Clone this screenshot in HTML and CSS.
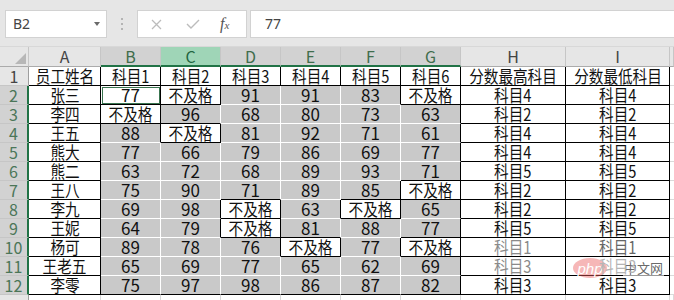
FILE: index.html
```html
<!DOCTYPE html>
<html lang="zh-CN">

<head>
  <meta charset="UTF-8">
  <meta name="viewport" content="width=device-width, initial-scale=1.0">
  <title>成绩表</title>
  <link rel="stylesheet" href="styles.css">
</head>

<body>
  <div class="toolbar">
    <div class="name-box">
      <span>B2</span>
      <span class="caret"></span>
    </div>
    <div class="grip"><i></i><i></i><i></i></div>
    <div class="fx-buttons">
      <svg class="btn-cancel" width="11" height="11" viewBox="0 0 11 11">
        <path d="M1 1 L10 10 M10 1 L1 10" stroke="#bcbcbc" stroke-width="1.3" fill="none" />
      </svg>
      <svg class="btn-enter" width="14" height="10" viewBox="0 0 14 10">
        <path d="M1 5 L5 9 L13 1" stroke="#bcbcbc" stroke-width="1.4" fill="none" />
      </svg>
      <span class="fx">f<small>x</small></span>
    </div>
    <div class="formula">77</div>
  </div>

  <div class="sheet" id="sheet">
    <div class="corner"><span class="corner-tri"></span></div>
    <div class="col-head">A</div>
    <div class="col-head sel">B</div>
    <div class="col-head sel hot">C</div>
    <div class="col-head sel">D</div>
    <div class="col-head sel">E</div>
    <div class="col-head sel">F</div>
    <div class="col-head sel">G</div>
    <div class="col-head">H</div>
    <div class="col-head">I</div>
    <div class="col-head"></div>

    <div class="watermark">
      <span class="wm-logo">php</span>
      <span class="wm-text">中文网</span>
    </div>
  </div>

  <script>
    const header = ['员工姓名', '科目1', '科目2', '科目3', '科目4', '科目5', '科目6', '分数最高科目', '分数最低科目'];

    const scores = [
      ['张三', 77, '不及格', 91, 91, 83, '不及格', '科目4', '科目4'],
      ['李四', '不及格', 96, 68, 80, 73, 63, '科目2', '科目2'],
      ['王五', 88, '不及格', 81, 92, 71, 61, '科目4', '科目4'],
      ['熊大', 77, 66, 79, 86, 69, 77, '科目4', '科目4'],
      ['熊二', 63, 72, 68, 89, 93, 71, '科目5', '科目5'],
      ['王八', 75, 90, 71, 89, 85, '不及格', '科目2', '科目2'],
      ['李九', 69, 98, '不及格', 63, '不及格', 65, '科目2', '科目2'],
      ['王妮', 64, 79, '不及格', 81, 88, 77, '科目5', '科目5'],
      ['杨可', 89, 78, 76, '不及格', 77, '不及格', '科目1', '科目1'],
      ['王老五', 65, 69, 77, 65, 62, 69, '科目3', '科目3'],
      ['李零', 75, 97, 98, 86, 87, 82, '科目3', '科目3']
    ];

    // active cell B2 stays white
    const active = { r: 0, c: 1 };

    // cells that sit under the watermark haze
    const faded = { '8-7': 'faded', '9-7': 'faded', '8-8': 'dim', '9-8': 'hidden' };

    const sheet = document.getElementById('sheet');

    function isGray(r, c) {
      if (r === active.r && c === active.c) return false;
      return r >= 0 && r < scores.length && c >= 1 && c <= 6 && typeof scores[r][c] === 'number';
    }

    function addDiv(className, value) {
      const div = document.createElement('div');
      div.className = className;
      if (typeof value === 'string') {
        div.innerHTML = `<span class="txt">${value}</span>`;
      } else if (value !== undefined) {
        div.textContent = value;
      }
      sheet.appendChild(div);
      return div;
    }

    // Row 1: titles
    addDiv('row-head', 1);
    header.forEach(title => addDiv('cell', title));
    addDiv('cell edge');

    // Rows 2-12: scores
    scores.forEach((row, r) => {
      addDiv('row-head sel', r + 2);
      row.forEach((value, c) => {
        let cls = 'cell';
        if (isGray(r, c)) {
          cls += ' gray';
          if (isGray(r, c + 1)) cls += ' jr';
          if (isGray(r + 1, c)) cls += ' jb';
        }
        if (r === active.r && c === active.c) cls += ' active';
        if (faded[r + '-' + c]) cls += ' ' + faded[r + '-' + c];
        addDiv(cls, value);
      });
      addDiv('cell edge');
    });

    // Row 13: empty, only its top shows
    addDiv('row-head');
    for (let c = 0; c < 10; c++) addDiv('cell blank');
  </script>
</body>

</html>
```

FILE: styles.css
```css
* {
  box-sizing: border-box;
  margin: 0;
  padding: 0;
}

body {
  width: 674px;
  height: 300px;
  overflow: hidden;
  background: #fff;
  font-family: 'Noto Sans', sans-serif;
}

/* formula bar */
.toolbar {
  display: flex;
  align-items: flex-start;
  height: 47px;
  padding: 10px 0 0 5px;
  background: #e6e6e6;
  border-bottom: 1px solid #d8d8d8;
}

.name-box {
  display: flex;
  align-items: center;
  justify-content: space-between;
  width: 102px;
  height: 28px;
  padding: 0 6px 0 7px;
  background: #fff;
  border: 1px solid #d2d2d2;
  color: #444;
  font-size: 14px;
  line-height: 18px;
}

.caret {
  width: 0;
  height: 0;
  border-left: 3.5px solid transparent;
  border-right: 3.5px solid transparent;
  border-top: 4px solid #6a6a6a;
}

.grip {
  display: flex;
  flex-direction: column;
  align-items: center;
  gap: 3px;
  width: 30px;
  padding-top: 8px;
}

.grip i {
  width: 2px;
  height: 2px;
  background: #b4b4b4;
}

.fx-buttons {
  display: flex;
  align-items: center;
  width: 110px;
  height: 28px;
  padding-left: 13px;
  background: #fff;
  border: 1px solid #d2d2d2;
}

.btn-enter {
  margin-left: 24px;
}

.fx {
  margin-left: 20px;
  font-family: 'Liberation Serif', serif;
  font-style: italic;
  font-size: 16px;
  line-height: 18px;
  color: #555;
}

.fx small {
  font-size: 11px;
}

.formula {
  flex: 1;
  height: 28px;
  margin-left: 3px;
  padding-left: 14px;
  background: #fff;
  border: 1px solid #d2d2d2;
  border-right: none;
  color: #444;
  font-size: 14px;
  line-height: 26px;
}

/* grid */
.sheet {
  position: relative;
  display: grid;
  grid-template-columns: 29px 72px repeat(6, 60px) 105px 104px 1fr;
  grid-template-rows: 20px;
  grid-auto-rows: 19px;
  font-family: 'Noto Sans CJK SC', sans-serif;
}

.corner {
  display: flex;
  align-items: flex-end;
  justify-content: flex-end;
  padding: 0 2px 2px 0;
  background: #e6e6e6;
  border-right: 1px solid #c6c6c6;
  border-bottom: 1px solid #ababab;
}

.corner-tri {
  width: 0;
  height: 0;
  border-left: 11px solid transparent;
  border-bottom: 11px solid #b7b7b7;
}

.col-head {
  display: flex;
  align-items: center;
  justify-content: center;
  background: #e6e6e6;
  border-right: 1px solid #c6c6c6;
  border-bottom: 1px solid #ababab;
  color: #444;
  font-size: 16px;
  line-height: 17px;
}

.col-head.sel {
  background: #d2d2d2;
  color: #3f6d4c;
  border-bottom: 2px solid #217346;
}

.col-head.hot {
  background: #9fd5b7;
  color: #22663f;
}

.row-head {
  display: flex;
  align-items: center;
  justify-content: center;
  background: #e6e6e6;
  border-right: 1px solid #9e9e9e;
  border-bottom: 1px solid #c6c6c6;
  color: #444;
  font-size: 16px;
  line-height: 17px;
}

.row-head.sel {
  background: #d2d2d2;
  color: #4b7658;
  border-right: 2px solid #217346;
}

.cell {
  display: flex;
  align-items: center;
  justify-content: center;
  border-right: 1px solid #000;
  border-bottom: 1px solid #000;
  color: #111;
  font-size: 17px;
  line-height: 18px;
  white-space: nowrap;
}

.cell .txt {
  display: inline-block;
  transform: scaleX(0.86);
}

.cell.gray {
  background: #c9c9c9;
}

.cell.jr {
  border-right-color: #fff;
}

.cell.jb {
  border-bottom-color: #fff;
}

.cell.active {
  outline: 1px solid #3a7550;
  outline-offset: -2px;
}

.cell.faded {
  color: #8a8a8a;
}

.cell.dim {
  color: #666;
}

.cell.hidden {
  color: #b5b5b5;
}

.cell.edge {
  border-right: none;
  border-bottom-color: #dadada;
}

.cell.blank {
  border-right-color: #dadada;
  border-bottom-color: #dadada;
}

/* site watermark */
.watermark {
  position: absolute;
  left: 573px;
  top: 211px;
  display: flex;
  align-items: center;
}

.wm-logo {
  display: flex;
  align-items: center;
  justify-content: center;
  width: 34px;
  height: 20px;
  border-radius: 50%;
  background: rgba(236, 96, 96, 0.45);
  color: #fff;
  font-family: 'Liberation Sans', sans-serif;
  font-style: italic;
  font-size: 15px;
  line-height: 17px;
}

.wm-text {
  margin-left: 16px;
  padding: 0 1px;
  background: rgba(255, 255, 255, 0.6);
  color: rgba(85, 85, 85, 0.9);
  font-size: 13px;
  line-height: 16px;
}
```
